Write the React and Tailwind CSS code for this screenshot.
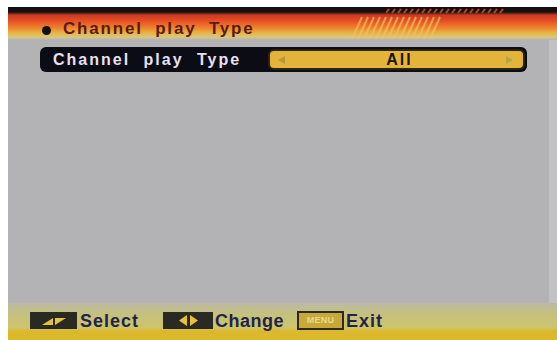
const Hatch = () => (
    <svg width="100" height="26" viewBox="0 0 100 26" className="absolute left-[340px] top-[6px]">
        {Array.from({ length: 14 }).map((_, i) => (
            <line key={i} x1={i * 6 + 4} y1="26" x2={i * 6 + 14} y2="4" stroke="#f7c060" strokeWidth="2" opacity="0.7" />
        ))}
    </svg>
);

const Dashes = () => (
    <svg width="120" height="7" viewBox="0 0 120 7" className="absolute left-[378px] top-0">
        {Array.from({ length: 20 }).map((_, i) => (
            <line key={i} x1={i * 6} y1="6" x2={i * 6 + 3} y2="2" stroke="#b04830" strokeWidth="2" />
        ))}
    </svg>
);

const KeyUpDown = () => (
    <div className="w-[47px] h-[17px] bg-[#2a2a22] flex items-center justify-center">
        <svg width="28" height="10" viewBox="0 0 28 10">
            <polygon points="2,9 13,2 13,9" fill="#e8c040" />
            <polygon points="15,2 26,2 15,9" fill="#e8c040" />
        </svg>
    </div>
);

const KeyLeftRight = () => (
    <div className="w-[50px] h-[17px] bg-[#2a2a22] flex items-center justify-center gap-[3px]">
        <svg width="8" height="11" viewBox="0 0 8 11"><polygon points="8,0 0,5.5 8,11" fill="#e8c040" /></svg>
        <svg width="8" height="11" viewBox="0 0 8 11"><polygon points="0,0 8,5.5 0,11" fill="#e8c040" /></svg>
    </div>
);

const KeyMenu = () => (
    <div className="w-[47px] h-[19px] bg-[#2a2a22] p-[2px]">
        <div className="w-full h-full bg-[#c8a838] flex items-center justify-center text-[9px] font-bold text-[#e8d890] tracking-wide">MENU</div>
    </div>
);

export default function App() {
    return (
        <div className="w-[557px] h-[340px] bg-white pt-[7px] pl-[8px] font-['Liberation_Sans',Arial,sans-serif]">
            <div className="w-[549px] h-[333px] flex flex-col bg-[#b3b2b4]">
                {/* header */}
                <div className="relative h-[33px] bg-[linear-gradient(to_bottom,#141210_0px,#141210_5px,#c83a20_8px,#e44a24_13px,#ee7c2c_20px,#e6b440_26px,#d8c880_30px,#b3b2b4_33px)]">
                    <Dashes />
                    <Hatch />
                    <div className="absolute left-[34px] top-[9px] flex items-center">
                        <span className="w-[9px] h-[9px] rounded-full bg-[#111] mt-[4px] mr-[12px]" />
                        <span className="text-[17px] font-bold text-[#5e1a0c] tracking-[1.8px] [word-spacing:6px]">Channel play Type</span>
                    </div>
                </div>

                {/* body */}
                <div className="flex-1 pl-[32px] pt-[7px] flex border-r-[8px] border-[#c2c2c4]">
                    <div className="flex h-[25px] w-[487px] rounded-[6px] bg-[#0c0c14] items-center">
                        <div className="w-[228px] pl-[13px] text-[16px] font-bold text-[#e8e0f0] tracking-[2px] [word-spacing:7px] whitespace-nowrap">Channel play Type</div>
                        <div className="flex-1 h-[21px] mr-[2px] rounded-[6px] bg-[#e4b43a] border-[2px] border-[#2a2410] flex items-center justify-between pl-[8px] pr-[10px]">
                            <svg width="7" height="8" viewBox="0 0 7 8"><polygon points="7,0 0,4 7,8" fill="#b89838" /></svg>
                            <span className="text-[16px] font-bold text-[#1a1408] tracking-[2px] pl-[8px]">All</span>
                            <svg width="7" height="8" viewBox="0 0 7 8"><polygon points="0,0 7,4 0,8" fill="#b0a840" /></svg>
                        </div>
                    </div>
                </div>

                {/* footer */}
                <div className="h-[37px] bg-[linear-gradient(to_bottom,#bcbaa6_0px,#c4c080_10px,#cec46a_25px,#dcb82c_28px,#dcb82c_37px)] flex items-start pt-[9px] pl-[22px]">
                    <KeyUpDown />
                    <span className="ml-[3px] text-[18px] font-bold text-[#23234a] leading-[18px] tracking-[1px]">Select</span>
                    <div className="ml-[24px]"><KeyLeftRight /></div>
                    <span className="ml-[2px] text-[18px] font-bold text-[#23234a] leading-[18px] tracking-[0.5px]">Change</span>
                    <div className="ml-[13px] -mt-[1px]"><KeyMenu /></div>
                    <span className="ml-[2px] text-[18px] font-bold text-[#23234a] leading-[18px] tracking-[1px]">Exit</span>
                </div>
            </div>
        </div>
    );
}
